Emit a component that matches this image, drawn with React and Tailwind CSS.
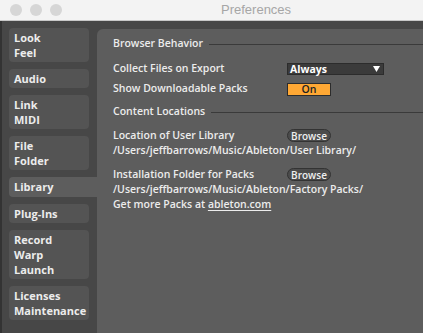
import React from "react";

const tabs = [
  { lines: ["Look", "Feel"] },
  { lines: ["Audio"] },
  { lines: ["Link", "MIDI"] },
  { lines: ["File", "Folder"] },
  { lines: ["Library"], active: true },
  { lines: ["Plug-Ins"] },
  { lines: ["Record", "Warp", "Launch"] },
  { lines: ["Licenses", "Maintenance"] },
];

function SectionHeader({ children }) {
  return (
    <div className="flex items-center h-5">
      <span className="whitespace-nowrap">{children}</span>
      <div className="flex-1 h-px bg-[#3a3a3a] ml-[6px]" />
    </div>
  );
}

function BrowseButton() {
  return (
    <div className="w-[44px] h-[13px] rounded-full bg-[#4b4b4b] border border-[#333] flex items-center justify-center text-[10px] leading-none text-[#eee]">
      Browse
    </div>
  );
}

export default function App() {
  return (
    <div
      className="w-[423px] h-[333px] overflow-hidden bg-[#474747] flex flex-col"
      style={{ fontFamily: "'Open Sans', Lato, sans-serif" }}
    >
      {/* title bar */}
      <div className="h-[21px] shrink-0 bg-[#f3f3f3] border-b border-[#c8c8c8] flex items-center">
        <div className="flex gap-[8px] pl-[10px]">
          <span className="w-[12px] h-[12px] rounded-full bg-[#d6d6d6]" />
          <span className="w-[12px] h-[12px] rounded-full bg-[#d6d6d6]" />
          <span className="w-[12px] h-[12px] rounded-full bg-[#d6d6d6]" />
        </div>
        <span
          className="ml-[159px] text-[13px] text-[#a6a6a6]"
          style={{ fontFamily: "'Liberation Sans', Arial, sans-serif" }}
        >
          Preferences
        </span>
      </div>

      <div className="flex flex-1 min-h-0 border-l-2 border-[#333]">
        {/* sidebar */}
        <div className="w-[95px] shrink-0 pt-[7px] pl-[7px] flex flex-col gap-[7px] text-[11px] font-bold text-[#ececec]">
          {tabs.map((t, i) =>
            t.active ? (
              <div
                key={i}
                className="h-[20px] bg-[#5d5d5d] rounded-l-[4px] pl-[5px] flex items-center"
              >
                {t.lines[0]}
              </div>
            ) : (
              <div
                key={i}
                className="w-[80px] bg-[#545454] rounded-[4px] pl-[5px] py-[2px] flex flex-col"
              >
                {t.lines.map((l) => (
                  <span key={l} className="h-[15px] leading-[15px]">
                    {l}
                  </span>
                ))}
              </div>
            )
          )}
        </div>

        {/* main panel */}
        <div className="flex-1 mt-[8px] bg-[#5d5d5d] rounded-tl-[6px] pl-[16px] pt-[5px] text-[10.5px] font-semibold text-[#ececec]">
          <SectionHeader>Browser Behavior</SectionHeader>
          <div className="flex items-center h-5 mt-[5px]">
            <span className="w-[174px]">Collect Files on Export</span>
            <div className="w-[97px] h-[12px] bg-[#3b3b3b] border border-[#2c2c2c] flex items-center justify-between pl-[2px] pr-[3px]">
              <span className="text-white font-bold leading-none">Always</span>
              <svg width="7" height="6" viewBox="0 0 7 6">
                <path d="M0 0h7L3.5 6z" fill="#fff" />
              </svg>
            </div>
          </div>
          <div className="flex items-center h-5">
            <span className="w-[174px]">Show Downloadable Packs</span>
            <div className="w-[44px] h-[13px] bg-[#ffa834] border border-[#2c2c2c] flex items-center justify-center text-[#222] leading-none">
              On
            </div>
          </div>
          <div className="mt-[3px]">
            <SectionHeader>Content Locations</SectionHeader>
          </div>
          <div className="flex items-center h-[15px] mt-[6px]">
            <span className="w-[174px]">Location of User Library</span>
            <BrowseButton />
          </div>
          <div className="h-[15px] leading-[15px]">
            /Users/jeffbarrows/Music/Ableton/User Library/
          </div>
          <div className="flex items-center h-[15px] mt-[9px]">
            <span className="w-[174px]">Installation Folder for Packs</span>
            <BrowseButton />
          </div>
          <div className="h-[15px] leading-[15px]">
            /Users/jeffbarrows/Music/Ableton/Factory Packs/
          </div>
          <div className="h-[15px] leading-[15px]">
            Get more Packs at{" "}
            <span className="underline underline-offset-2">ableton.com</span>
          </div>
        </div>
      </div>
    </div>
  );
}
